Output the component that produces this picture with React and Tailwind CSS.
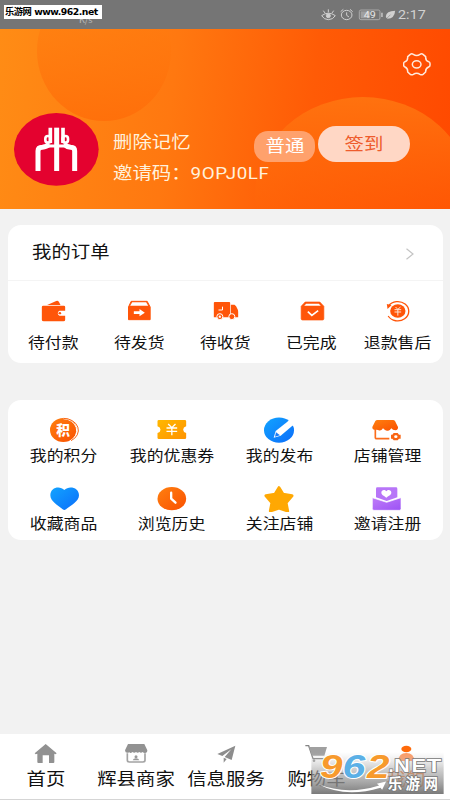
import React from "react";

function Icon({ box, children }) {
  return (
    <svg viewBox={box} className="block h-7 w-8 shrink-0">
      {children}
    </svg>
  );
}

const OR = "#ff5509";

const orders = [
  {
    label: "待付款",
    icon: (
      <Icon box="112.5 231 96 84">
        <path d="M140 255 L167 243 Q172 241 175 245 L180 255Z" fill={OR} />
        <path d="M128 257 H190 Q194 257 194 261 V272 H177 a8 8 0 0 0 0 15 H194 V299 Q194 304 189 304 H130 Q124 304 124 299 V261 Q124 257 128 257Z" fill={OR} />
        <ellipse cx="178" cy="279.500" rx="4" ry="3.500" fill={OR} />
      </Icon>
    ),
  },
  {
    label: "待发货",
    icon: (
      <Icon box="370.5 231 96 84">
        <path d="M392 244 H440 L449 261 V299 H384 V261Z" fill={OR} stroke={OR} strokeWidth="3" strokeLinejoin="round" />
        <path d="M395 247 H437 L443 257 H389Z" fill="#fff" />
        <path d="M400 274 H417 V267 L433 278 L417 289 V282 H400Z" fill="#fff" />
      </Icon>
    ),
  },
  {
    label: "待收货",
    icon: (
      <Icon box="628.5 231 96 84">
        <path d="M643 246 H686 Q689 246 689 249 V292 H640 V249 Q640 246 643 246Z" fill={OR} />
        <path d="M691 254 H702 Q707 256 711 267 Q713 271 713 275 V292 H691Z" fill={OR} />
        <path d="M666 260 V270 H654" fill="none" stroke="#fff" strokeWidth="3" />
        <circle cx="658" cy="290" r="9" fill={OR} stroke="#fff" strokeWidth="3" />
        <circle cx="694" cy="290" r="9" fill={OR} stroke="#fff" strokeWidth="3" />
        <circle cx="658" cy="290" r="3.500" fill="#fff" />
      </Icon>
    ),
  },
  {
    label: "已完成",
    icon: (
      <Icon box="211.5 231 96 84">
        <path d="M239 246 H283 L295 259 V296 Q295 300 291 300 H231 Q227 300 227 296 V259Z" fill={OR} stroke={OR} strokeWidth="2" strokeLinejoin="round" />
        <path d="M242 251 H280 L286 257 H236Z" fill="#fff" />
        <path d="M247 275 L259 286 L278 272" fill="none" stroke="#fff" strokeWidth="5" />
      </Icon>
    ),
  },
  {
    label: "退款售后",
    icon: (
      <Icon box="469.5 231 96 84">
        <ellipse cx="517" cy="273" rx="23" ry="20" fill={OR} />
        <path d="M489 258 A33 29 0 1 1 488 288" fill="none" stroke={OR} strokeWidth="4" />
        <path d="M484 252 L498 256 L486 267Z" fill={OR} />
        <path d="M510 261 L517 268 L525 261 M507 269 H527 M507 276 H527 M517 268 V287" fill="none" stroke="#ffe4d4" strokeWidth="3" />
      </Icon>
    ),
  },
];

const tools = [
  {
    label: "我的积分",
    icon: (
      <Icon box="144 63 96 84">
        <ellipse cx="190" cy="105" rx="40" ry="36" fill="url(#or)" />
        <path d="M190 71 A41 36 0 0 1 210 138" fill="none" stroke="#fff" strokeWidth="3" />
        <path d="M190 70 A45 36 0 0 1 213 137" fill="none" stroke="#f96718" strokeWidth="3" />
        <text x="189" y="121" textAnchor="middle" fontSize="41" fontWeight="800" fill="#fff">积</text>
      </Icon>
    ),
  },
  {
    label: "我的优惠券",
    icon: (
      <Icon box="466.5 63 96 84">
        <path d="M475 75 H553 Q557 75 557 79 V94 Q548 97 548 104 Q548 111 557 114 V128 Q557 132 553 132 H475 Q471 132 471 128 V114 Q480 111 480 104 Q480 97 471 94 V79 Q471 75 475 75Z" fill="url(#yl)" />
        <path d="M503 87 L514 98 L525 87 M498 99 H530 M498 109 H530 M514 98 V121" fill="none" stroke="#fff" strokeWidth="4" />
      </Icon>
    ),
  },
  {
    label: "我的发布",
    icon: (
      <Icon box="114 63 96 84">
        <ellipse cx="162" cy="105.500" rx="45" ry="38" fill="url(#bl)" />
        <path d="M188 80 L202 92 L216 78 L202 62Z" fill="#fff" />
        <path d="M152 108 L190 78 L204 91 L167 122 L146 128Z" fill="#fff" />
        <path d="M153 112 L165 121 L150 125Z" fill="#1a7cf8" />
        <path d="M157 108 L168 118" stroke="#fff" strokeWidth="3" />
      </Icon>
    ),
  },
  {
    label: "店铺管理",
    icon: (
      <Icon box="438 63 96 84">
        <path d="M457 75 H504 Q508 75 510 78 L519 96 Q520 105 511 106 Q503 106 499 100 Q494 109 487 107 Q481 108 474 100 Q468 109 461 106 Q457 103 451 105 Q441 104 442 96 L451 78 Q453 75 457 75Z" fill="url(#or)" />
        <path d="M451 104 V128 Q451 131 455 131 H493" fill="none" stroke="#fb6d1c" strokeWidth="5" />
        <path d="M506 114 H518 L522 119 H527 V131 H522 L518 136 H506 L502 131 H498 V119 H502Z" fill="#f96512" />
        <ellipse cx="512.500" cy="125" rx="5" ry="4" fill="#fff" />
      </Icon>
    ),
  },
  {
    label: "收藏商品",
    icon: (
      <Icon box="144 267 96 84">
        <path d="M193 285 C180 271 151 276 151 301 C151 319 174 332 188 343 Q193 347 198 343 C213 332 237 319 237 301 C237 276 206 271 193 285Z" fill="url(#bl)" />
      </Icon>
    ),
  },
  {
    label: "浏览历史",
    icon: (
      <Icon box="466.5 267 96 84">
        <ellipse cx="514" cy="311" rx="43" ry="35" fill="url(#or)" />
        <path d="M512 293 V311 L525 323" fill="none" stroke="#fff" strokeWidth="7" strokeLinecap="round" strokeLinejoin="round" />
      </Icon>
    ),
  },
  {
    label: "关注店铺",
    icon: (
      <Icon box="114 268 96 84">
        <path d="M162 279 L174 299 L201 303 L183 324 L188 349 L162 340 L136 349 L141 324 L123 303 L150 299Z" fill="#ffa803" stroke="#ffa803" strokeWidth="9" strokeLinejoin="round" />
      </Icon>
    ),
  },
  {
    label: "邀请注册",
    icon: (
      <Icon box="438 267 96 84">
        <path d="M457 277 H513 Q517 277 517 281 V307 L485 318 L453 307 V281 Q453 277 457 277Z" fill="#b775f8" />
        <path d="M484 289 C479 282 469 285 469 293 C469 300 479 303 484 308 C489 303 499 300 499 293 C499 285 489 282 484 289Z" fill="#fff" />
        <path d="M442 308 L485 322 L528 308 V341 Q528 346 523 346 H447 Q442 346 442 341Z" fill="url(#pu)" stroke="#fff" strokeWidth="2" />
      </Icon>
    ),
  },
];

const tabs = [
  {
    label: "首页",
    icon: (
      <Icon box="89 42 96 84">
        <path d="M136 57 L169 85 L166 88 L162 86 V111 Q162 114 159 114 H146 V91 H127 V114 H114 Q111 114 111 111 V86 L106 88 L103 85Z" fill="#919191" />
      </Icon>
    ),
  },
  {
    label: "辉县商家",
    icon: (
      <Icon box="360 42 96 84">
        <path d="M384 57 H433 L442 76 Q442 84 435 84 Q430 84 428 81 Q423 86 418 81 Q413 86 408 81 Q403 86 397 81 Q392 86 388 82 Q376 87 375 76Z" fill="#929292" />
        <path d="M382 85 V106 Q382 111 388 111 H429 Q435 111 435 106 V85" fill="none" stroke="#a3a3a3" strokeWidth="5" />
        <circle cx="408" cy="95" r="4.500" fill="#999" />
        <path d="M398 106 Q400 100 408 100 Q416 100 418 106Z" fill="#999" />
      </Icon>
    ),
  },
  {
    label: "信息服务",
    icon: (
      <Icon box="630 42 96 84">
        <path d="M706 62 L652 87 L667 93 L694 73 L674 96 L695 105Z" fill="#8d8d8d" />
        <path d="M671 98 V113 L680 102Z" fill="#8d8d8d" />
      </Icon>
    ),
  },
  {
    label: "购物车",
    icon: (
      <Icon box="225 42 96 84">
        <path d="M241 62 H251 L264 101 H302" fill="none" stroke="#858585" strokeWidth="4" />
        <path d="M252 66 H306 L298 92 H261Z" fill="#a0a0a0" />
        <circle cx="267" cy="107" r="4" fill="#999" />
        <circle cx="295" cy="107" r="4" fill="#999" />
      </Icon>
    ),
  },
  {
    label: "我的",
    active: true,
    icon: (
      <Icon box="495 42 96 84">
        <ellipse cx="544" cy="72" rx="15" ry="10" fill="#ff6a0a" />
        <path d="M520 108 Q521 84 544 84 Q567 84 568 108Z" fill="#ff9a62" />
      </Icon>
    ),
  },
];

function Gradients() {
  return (
    <svg className="absolute h-0 w-0">
      <defs>
        <linearGradient id="or" x1="0" y1="0" x2="1" y2="1"><stop stopColor="#ff8010" /><stop offset="1" stopColor="#fa5000" /></linearGradient>
        <linearGradient id="yl" x1="0" y1="0" x2="1" y2="1"><stop stopColor="#ffb800" /><stop offset="1" stopColor="#ff9300" /></linearGradient>
        <linearGradient id="bl" x1="0" y1="0" x2="1" y2="1"><stop stopColor="#12a4ff" /><stop offset="1" stopColor="#0b6dfa" /></linearGradient>
        <linearGradient id="pu" x1="0" y1="0" x2="1" y2="1"><stop stopColor="#bf7cf8" /><stop offset="1" stopColor="#9c52f5" /></linearGradient>
      </defs>
    </svg>
  );
}

function StatusBar() {
  return (
    <div className="relative flex h-[29px] items-center bg-[#757575] text-[#d2d2d2]">
      <span className="absolute left-[79px] top-[14px] text-[9px] leading-[12px] text-[#bdbdbd]">K/s</span>
      <div className="absolute left-1 top-[5px] flex h-[14px] w-[98px] items-center whitespace-nowrap bg-white pl-px text-black">
        <span className="font-['DejaVu_Sans','Noto_Sans_CJK_SC',sans-serif] text-[9.3px] font-bold leading-[14px] tracking-[-0.5px]">乐游网 www.962.net</span>
      </div>
      <svg viewBox="285 20 190 48" className="ml-[320px] h-4 w-[63.3px]" fill="none" stroke="#d0d0d0" strokeWidth="3">
        <path d="M290 46 Q310 31 331 46 Q324 58 310 58 Q297 58 290 46Z M310 27 V36 M295 31 L300 38 M326 31 L321 38" />
        <circle cx="310" cy="46" r="6" fill="#d0d0d0" />
        <ellipse cx="365" cy="44" rx="16" ry="14" />
        <path d="M365 36 V45 L372 50 M347 34 L355 27 M375 27 L383 34" />
        <rect x="403" y="29" width="62" height="29" rx="5" stroke="#aaa" />
        <rect x="407" y="33" width="28" height="21" fill="#a0a0a0" stroke="none" />
        <path d="M471 37 V50" strokeWidth="4" />
        <text x="434" y="52" fontSize="25" textLength="36" lengthAdjust="spacingAndGlyphs" fill="#e8e8e8" stroke="none" textAnchor="middle" className="font-[Roboto,sans-serif]">49</text>
      </svg>
      <svg viewBox="482 28 32 30" className="ml-[2px] h-[10px] w-[11px]">
        <path d="M512 30 Q485 31 484 47 Q484 52 489 54 Q510 54 512 30Z" fill="#d0d0d0" />
        <path d="M483 57 L498 42" stroke="#757575" strokeWidth="1.500" />
      </svg>
      <span className="ml-[2px] inline-block origin-left scale-x-[1.14] font-[Roboto,sans-serif] text-[12.500px] leading-4 tracking-[0.1px]">2:17</span>
    </div>
  );
}

function Profile() {
  return (
    <header className="relative h-[180px] overflow-hidden bg-[linear-gradient(97deg,#ff8c15_0%,#ff7810_38%,#ff5b06_68%,#ff4900_100%)]">
      <svg className="absolute inset-0" width="450" height="180">
        <defs>
          <linearGradient id="c1" x1="0" y1="0" x2="0" y2="1"><stop offset=".2" stopColor="#ff7d10" stopOpacity=".5" /><stop offset="1" stopColor="#ff6b08" stopOpacity=".75" /></linearGradient>
          <linearGradient id="c2" x1="0" y1="0" x2="0" y2="1"><stop stopColor="#ff7510" stopOpacity=".9" /><stop offset=".75" stopColor="#ff5f06" stopOpacity=".4" /></linearGradient>
        </defs>
        <ellipse cx="104" cy="22" rx="67" ry="70" fill="url(#c1)" />
        <ellipse cx="363" cy="166" rx="108" ry="98" fill="url(#c2)" />
      </svg>
      <div className="relative flex h-full">
        <svg viewBox="0 0 255 219" className="ml-[14px] mt-[84px] h-[73px] w-[85px] shrink-0">
          <ellipse cx="127" cy="109" rx="127" ry="109" fill="#e4022f" />
          <g fill="none" stroke="#fff">
            <path d="M128 44 V174" strokeWidth="15" />
            <path d="M109 44 V90 M147 44 V90" strokeWidth="11" />
            <rect x="94" y="69" width="16" height="20" rx="8" strokeWidth="8" />
            <rect x="146" y="69" width="16" height="20" rx="8" strokeWidth="8" />
            <path d="M72 174 V114 Q72 103 85 103 Q98 102 106 94 M182 174 V114 Q182 103 170 103 Q158 102 150 94" strokeWidth="15" />
            <path d="M100 99 H155" strokeWidth="9" />
          </g>
        </svg>
        <div className="ml-[13.500px] mt-[99px] w-[141.500px] shrink-0 whitespace-nowrap text-[17px] text-[#fff1dc]">
          <div className="origin-left scale-x-[1.14] leading-[26px]">删除记忆</div>
          <div className="mt-[5px] flex origin-left scale-x-[1.14] items-baseline leading-[26px]">
            邀请码：<span className="font-[Roboto,sans-serif] text-[16.500px] tracking-[0.5px]">9OPJ0LF</span>
          </div>
        </div>
        <div className="mt-[102px] flex h-[31px] w-[61px] shrink-0 items-center justify-center rounded-[14px] bg-[#ffa16c] text-[17px] leading-none text-white">
          <span className="inline-block -translate-y-[2px] scale-x-[1.14]">普通</span>
        </div>
        <div className="ml-[3px] mt-[97px] flex h-[36px] w-[92px] shrink-0 items-center justify-center rounded-[18px] bg-[#ffd7c5] text-[17px] leading-none text-[#ee5c2d]">
          <span className="inline-block -translate-y-[2px] scale-x-[1.14]">签到</span>
        </div>
      </div>
      <svg viewBox="534 159 84 69" className="absolute left-[403px] top-6 h-[23px] w-7" fill="none" stroke="#ffe9dc" strokeWidth="4.500" strokeLinejoin="round">
        <path d="M556 163 Q560 160 565 163 Q575 170 585 163 Q590 160 594 163 L602 170 Q601 182 611 185 Q616 187 615 193 Q616 199 611 201 Q601 205 602 216 L594 223 Q590 226 585 223 Q575 216 565 223 Q560 226 556 223 L548 216 Q549 205 540 201 Q535 199 536 193 Q535 187 540 185 Q549 182 548 170Z" />
        <ellipse cx="575" cy="193" rx="13" ry="11" />
      </svg>
    </header>
  );
}

function Watermark() {
  return (
    <svg viewBox="258 80 400 127" className="absolute left-[311px] top-[752px] h-[42px] w-[133px] overflow-visible">
      <defs>
        <linearGradient id="wm" x1="0" y1="0" x2="0" y2="1"><stop stopColor="#ccc" stopOpacity="0" /><stop offset=".4" stopColor="#b0b0b0" stopOpacity=".6" /><stop offset="1" stopColor="#737373" stopOpacity=".95" /></linearGradient>
      </defs>
      <rect x="258" y="80" width="400" height="127" fill="url(#wm)" />
      <g className="font-['Liberation_Sans',sans-serif]" fontSize="99" fontWeight="700" fontStyle="italic" strokeLinejoin="round" stroke="#fff" strokeWidth="6" paintOrder="stroke">
        <text x="284" y="158" textLength="68" lengthAdjust="spacingAndGlyphs" fill="#f79a2d">9</text>
        <text x="352" y="158" textLength="69" lengthAdjust="spacingAndGlyphs" fill="#5bb0e6">6</text>
        <text x="426" y="158" textLength="68" lengthAdjust="spacingAndGlyphs" fill="#f79a2d">2</text>
      </g>
      <g className="font-['Liberation_Sans',sans-serif]" fontSize="56" fontWeight="700" fill="#fff" stroke="#777" strokeWidth="4" paintOrder="stroke">
        <text x="491" y="140">.</text>
        <text x="508" y="140" textLength="48" lengthAdjust="spacingAndGlyphs">N</text>
        <text x="561" y="140" textLength="44" lengthAdjust="spacingAndGlyphs">E</text>
        <text x="607" y="140" textLength="44" lengthAdjust="spacingAndGlyphs">T</text>
      </g>
      <text x="489" y="192" fontSize="44" fontWeight="700" textLength="152" fill="#fff" stroke="#777" strokeWidth="5" paintOrder="stroke">乐游网</text>
      <path d="M278 177 Q365 212 463 181 L456 176 L484 169 L472 194 L467 188 Q360 220 278 177Z" fill="#fff" />
    </svg>
  );
}

export default function App() {
  return (
    <div className="relative flex h-[800px] w-[450px] flex-col overflow-hidden bg-[#f2f2f2] font-['Noto_Sans_CJK_SC',sans-serif] text-[#111]">
      <Gradients />
      <StatusBar />
      <Profile />
      <section className="ml-2 mt-4 h-[138px] w-[435px] rounded-[13px] bg-white">
        <div className="flex h-14 items-center justify-between border-b border-[#f4f4f4] pl-[23.500px] pr-[29px]">
          <span className="inline-block origin-left -translate-y-[2px] scale-x-[1.14] text-[17px] leading-6">我的订单</span>
          <svg viewBox="0 0 8 12" className="mt-[3px] h-3 w-2" fill="none" stroke="#c4c4c4" strokeWidth="1.200"><path d="M.5 .7 L7 6 L.5 11.300" /></svg>
        </div>
        <div className="ml-[2.500px] grid w-[430px] grid-cols-5 pt-4">
          {orders.map((o) => (
            <div key={o.label} className="flex flex-col items-center">
              {o.icon}
              <span className="mt-[7px] scale-x-[1.14] whitespace-nowrap text-[14.800px] leading-5">{o.label}</span>
            </div>
          ))}
        </div>
      </section>
      <section className="ml-2 mt-[37px] h-[140px] w-[435px] rounded-[13px] bg-white">
        <div className="ml-[2px] grid w-[431px] grid-cols-4 gap-y-[12px] pt-4">
          {tools.map((o) => (
            <div key={o.label} className="flex h-14 flex-col items-center">
              {o.icon}
              <span className="mt-px scale-x-[1.14] whitespace-nowrap text-[14.800px] leading-5">{o.label}</span>
            </div>
          ))}
        </div>
      </section>
      <nav className="mt-auto h-[66px] w-[450px] border-b border-[#d5d5d5] bg-white">
        <div className="ml-px grid w-[450px] grid-cols-5 pt-[5px]">
          {tabs.map((o) => (
            <div key={o.label} className={o.active ? "flex flex-col items-center text-[#ff6a0a]" : "flex flex-col items-center"}>
              {o.icon}
              <span className="-mt-px scale-x-[1.14] whitespace-nowrap text-[17px] leading-6">{o.label}</span>
            </div>
          ))}
        </div>
      </nav>
      <Watermark />
    </div>
  );
}
